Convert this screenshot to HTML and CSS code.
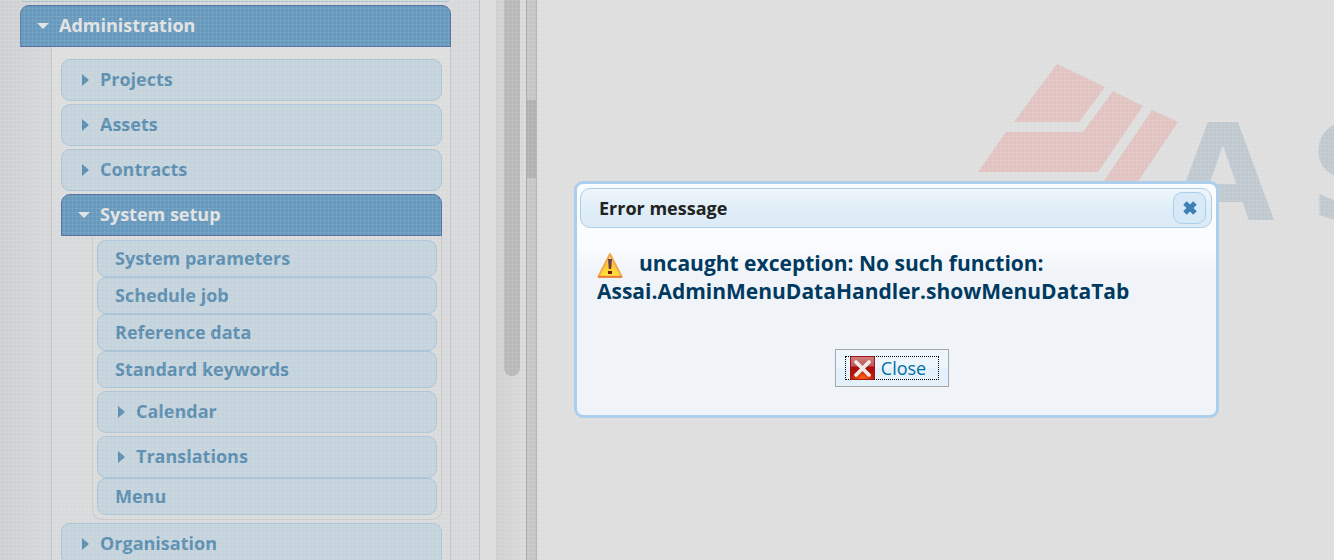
FILE: index.html
```
<!DOCTYPE html>
<html lang="en">
<head>
<meta charset="utf-8">
<title>Administration</title>
<link rel="stylesheet" href="styles.css">
</head>
<body>
<div class="app">
  <nav class="sidebar">
    <div class="previous"></div>
    <button class="item open"><svg class="arrow" viewBox="0 0 12 12"><path d="M0 3h12L6 9z"/></svg>Administration</button>
    <div class="group">
      <button class="item"><svg class="arrow" viewBox="0 0 12 12"><path d="M4 0l7 6-7 6z"/></svg>Projects</button>
      <button class="item"><svg class="arrow" viewBox="0 0 12 12"><path d="M4 0l7 6-7 6z"/></svg>Assets</button>
      <button class="item"><svg class="arrow" viewBox="0 0 12 12"><path d="M4 0l7 6-7 6z"/></svg>Contracts</button>
      <div class="section">
        <button class="item open"><svg class="arrow" viewBox="0 0 12 12"><path d="M0 3h12L6 9z"/></svg>System setup</button>
        <div class="subgroup">
          <button class="leaf">System parameters</button>
          <button class="leaf">Schedule job</button>
          <button class="leaf">Reference data</button>
          <button class="leaf">Standard keywords</button>
          <div class="branches">
            <button class="item"><svg class="arrow" viewBox="0 0 12 12"><path d="M4 0l7 6-7 6z"/></svg>Calendar</button>
            <button class="item"><svg class="arrow" viewBox="0 0 12 12"><path d="M4 0l7 6-7 6z"/></svg>Translations</button>
          </div>
          <button class="leaf">Menu</button>
        </div>
      </div>
      <button class="item"><svg class="arrow" viewBox="0 0 12 12"><path d="M4 0l7 6-7 6z"/></svg>Organisation</button>
    </div>
  </nav>
  <div class="gutter"></div>
  <div class="track"><div class="thumb"></div></div>
  <div class="splitter"><div class="grip"></div></div>
  <main class="content">
    <svg class="logo" width="540" height="170" viewBox="0 0 540 170">
      <g class="mark">
        <path d="M79 0L127 23 101 58H36z"/>
        <path d="M135 27L165 42 120 108H0L28 68H105z"/>
        <path d="M174 46L200 58 133 158 98 158z"/>
      </g>
      <text class="wordmark" x="193 331" y="156">AS</text>
    </svg>
  </main>
</div>
<div class="overlay"></div>
<section class="dialog" role="dialog" aria-labelledby="dialog-title">
  <header class="titlebar">
    <h2 class="title" id="dialog-title">Error message</h2>
    <button class="dismiss" aria-label="Dismiss"><svg width="16" height="16" viewBox="0 0 16 16"><path d="M3 3l10 10M13 3L3 13"/></svg></button>
  </header>
  <p class="message"><svg class="warning" width="26" height="26" viewBox="0 0 26 26">
    <defs><linearGradient id="amber" x2="0" y2="1"><stop offset="0" stop-color="#ffe48a"/><stop offset=".5" stop-color="#ffc62c"/><stop offset="1" stop-color="#ffe93c"/></linearGradient></defs>
    <path d="M13 2L24.500 24.500H1.500z" fill="url(#amber)" stroke="#f2a850" stroke-width="2" stroke-linejoin="round"/>
    <path d="M1 25H25" stroke="#e8702c" stroke-width="1.500"/>
    <path d="M11 7h4l-.8 10h-2.400z" fill="#62404a"/><rect x="11" y="19" width="4" height="3" fill="#7a1810"/>
  </svg>uncaught exception: No such function: Assai.AdminMenuDataHandler.showMenuDataTab</p>
  <div class="actions">
    <button class="close"><span class="focus"><svg width="25" height="24" viewBox="0 0 25 24">
      <defs><linearGradient id="red" x2="0" y2="1"><stop offset="0" stop-color="#d08080"/><stop offset=".42" stop-color="#c05858"/><stop offset=".45" stop-color="#a80c0c"/><stop offset="1" stop-color="#c02008"/></linearGradient>
      <radialGradient id="glow" cx=".5" cy=".9" r=".5"><stop offset="0" stop-color="#ff6010"/><stop offset="1" stop-color="#ff6010" stop-opacity="0"/></radialGradient></defs>
      <rect x=".5" y=".5" width="24" height="23" rx="1.500" fill="url(#red)" stroke="#a01414"/>
      <rect x="1" y="8" width="23" height="15" fill="url(#glow)"/>
      <path d="M6 6l13 13M19 6L6 19" stroke="#eeeaea" stroke-width="3.800" stroke-linecap="round"/>
    </svg>Close</span></button>
  </div>
</section>
</body>
</html>
```
FILE: styles.css
```
* { box-sizing: border-box; }
body {
  margin: 0;
  height: 100vh;
  overflow: hidden;
  font-family: "Open Sans", "Noto Sans", sans-serif;
  background: #dedede;
}
button { font: inherit; margin: 0; }
.app { display: flex; height: 100vh; overflow: hidden; }

.sidebar {
  flex: none;
  width: 480px;
  padding: 0 28px 0 20px;
  border-right: 1px solid #c2c3c4;
  background: linear-gradient(90deg, #cdced0, #d5d6d8 40px, #d7d8da);
}
.previous {
  height: 2px;
  margin: 0 2px 3px;
  border: 1px solid #a9c3d6;
  border-top: 0;
  border-radius: 0 0 8px 8px;
}
.item, .leaf {
  display: flex;
  align-items: center;
  width: 100%;
  border: 1px solid #a9c3d7;
  border-radius: 9px;
  background: #c5d3dc;
  color: #5b8eb0;
  font-size: 18px;
  font-weight: 660;
  line-height: 24px;
}
.item { height: 42px; padding: 0 16px 2px; gap: 10px; }
.leaf { height: 37px; padding: 0 17px 2px; }
.open {
  border-color: #5670a4;
  border-radius: 9px 9px 0 0;
  background: #6699bd;
  color: #e2e2e2;
}
.arrow { width: 12px; height: 14px; padding-top: 2px; fill: currentColor; }
.group {
  display: grid;
  gap: 3px;
  margin-left: 31px;
  padding: 12px 8px 12px 9px;
  border: 1px solid #c3c5c7;
  border-top: 0;
  background: linear-gradient(#dedede, #d8d9da 200px);
}
.subgroup {
  margin-left: 31px;
  padding: 4px;
  border: 1px solid #c9c9ca;
  border-top: 0;
  border-radius: 0 0 10px 10px;
  background: #d9dada;
}
.branches { display: grid; gap: 3px; padding-top: 3px; }

.gutter { flex: none; width: 16px; background: #dcdcdc; }
.track { flex: none; width: 30px; padding: 0 6px 0 8px; background: linear-gradient(90deg, #c9c9c9, #d1d1d1 2px, #dadada); }
.thumb { height: 376px; border-radius: 0 0 8px 8px; background: #b9b9b9; }
.splitter {
  flex: none;
  width: 11px;
  padding-top: 100px;
  border: solid #acacac;
  border-width: 0 1px;
  background: #c6c6c6;
}
.grip { height: 78px; background: #b1b1b1; }

.content { flex: 1; min-width: 0; overflow: hidden; padding: 64px 0 0 441px; }
.logo { display: block; }
.mark { fill: #e1c3c2; }
.wordmark { fill: #c0c9d0; font: bold 134px "DejaVu Sans", sans-serif; }

.overlay {
  position: absolute;
  inset: 0;
  pointer-events: none;
  background:
    repeating-linear-gradient(90deg, #ffffff14 0 1px, transparent 1px 4px),
    repeating-linear-gradient(#ffffff14 0 1px, transparent 1px 4px);
}

.dialog {
  position: absolute;
  left: 574px;
  top: 181px;
  width: 645px;
  padding: 4px 4px 28px 3px;
  border: 3px solid #abcfec;
  border-radius: 9px;
  background: linear-gradient(#fbfcfe 60px, #f0f4f8 90px);
}
.titlebar {
  display: flex;
  align-items: center;
  justify-content: space-between;
  height: 40px;
  padding: 0 5px 0 18px;
  border: 1px solid #abcfe8;
  border-radius: 10px;
  background: linear-gradient(#eff6fb, #deedf7 60%, #dcebf7);
}
.title { margin: 0; font-size: 18px; line-height: 24px; font-weight: 660; color: #222; }
.dismiss {
  display: grid;
  place-items: center;
  width: 33px;
  height: 32px;
  padding: 0;
  border: 1px solid #abcfe8;
  border-radius: 9px;
  background: #d8eaf8;
}
.dismiss path { stroke: #3d80b3; stroke-width: 5; }
.message {
  margin: 22px 18px 0 17px;
  color: #003a60;
  font-size: 21px;
  font-weight: 660;
  line-height: 27px;
}
.warning { margin-right: 16px; vertical-align: -7px; height: 26px; }
.actions { display: flex; justify-content: center; padding: 44px 8px 0 0; }
.close {
  height: 38px;
  padding: 0 9px;
  border: 1px solid #a7a7a7;
  background: linear-gradient(#eef6fd 50%, #e4f1fb 50%);
  color: #0070a3;
  font-size: 18px;
  line-height: 24px;
}
.focus { display: flex; align-items: center; gap: 6px; height: 24px; padding: 0 12px 0 4px; border: 1px dotted #000; }
```
